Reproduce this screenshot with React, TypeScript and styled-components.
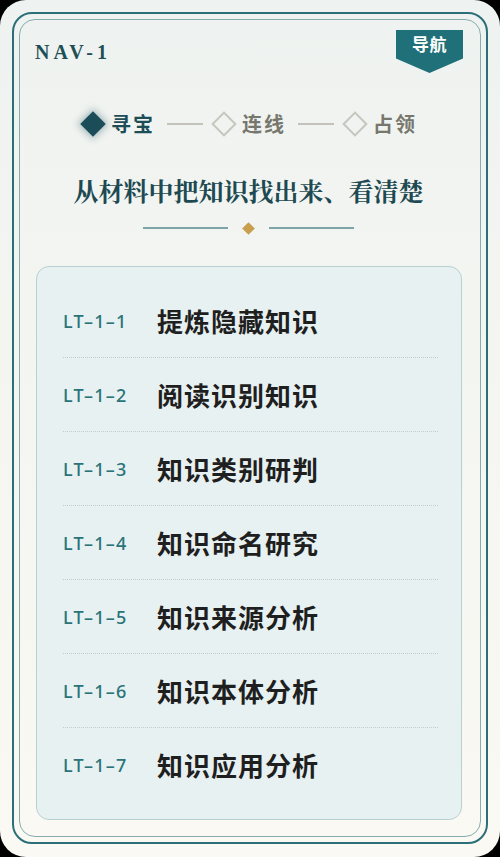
import React from "react";
import styled, { createGlobalStyle } from "styled-components";

const Global = createGlobalStyle`
  html, body { margin: 0; padding: 0; background: #000; }
  body { font-family: "Noto Sans CJK SC", "Noto Sans", sans-serif; }
  * { box-sizing: border-box; }
`;

const Screen = styled.div`
  width: 500px;
  height: 857px;
  border-radius: 26px;
  overflow: hidden;
  background: linear-gradient(180deg, #eef2f0 0%, #f3f5f1 35%, #faf9f3 100%);
  padding: 12px 12px 13px 12px;
`;

const OuterFrame = styled.div`
  height: 100%;
  border: 2px solid #2b6f78;
  border-radius: 20px;
  padding: 5px 5px 5px 5px;
`;

const InnerFrame = styled.div`
  height: 100%;
  border: 1.5px solid #86acad;
  border-radius: 16px;
  padding: 0 18px 0 15px;
  display: flex;
  flex-direction: column;
`;

const Header = styled.div`
  display: flex;
  justify-content: space-between;
  align-items: flex-start;
  margin-top: 10px;
  height: 43px;
`;

const NavCode = styled.div`
  font-family: "Liberation Serif", "DejaVu Serif", serif;
  font-weight: 700;
  font-size: 20px;
  line-height: 1;
  letter-spacing: 4px;
  color: #1e4f56;
  padding-top: 12px;
`;

const Badge = styled.div`
  width: 67px;
  height: 43px;
  margin-right: -1px;
  background: #1f7078;
  clip-path: polygon(0 0, 100% 0, 100% 66%, 50% 100%, 0 66%);
  color: #fff;
  font-weight: 700;
  font-size: 17px;
  line-height: 1;
  text-align: center;
  padding-top: 5px;
  letter-spacing: 0.5px;
`;

const Steps = styled.div`
  display: flex;
  align-items: center;
  justify-content: center;
  height: 30px;
  margin-top: 36px;
  padding-left: 4px;
`;

const Step = styled.div`
  display: flex;
  align-items: center;
  gap: 9px;
`;

const Diamond = styled.span<{ $active?: boolean }>`
  width: 18px;
  height: 18px;
  transform: rotate(45deg);
  display: block;
  background: ${(p) => (p.$active ? "#1b4d59" : "transparent")};
  border: ${(p) => (p.$active ? "none" : "2px solid #c6c6bf")};
  box-shadow: ${(p) => (p.$active ? "0 0 7px 2px rgba(27, 77, 89, 0.35)" : "none")};
`;

const StepLabel = styled.span<{ $active?: boolean }>`
  font-size: 20px;
  font-weight: 700;
  letter-spacing: 2px;
  line-height: 1;
  color: ${(p) => (p.$active ? "#1e4d57" : "#77776e")};
`;

const StepLine = styled.span`
  width: 36px;
  height: 2px;
  background: #c2c2ba;
  margin: 0 12px;
`;

const Subtitle = styled.div`
  margin-top: 34px;
  text-align: center;
  font-family: "Noto Serif CJK SC", "Noto Serif CJK", "Noto Sans CJK SC", serif;
  font-size: 25px;
  font-weight: 700;
  line-height: 34px;
  color: #1d4a52;
`;

const Divider = styled.div`
  display: flex;
  align-items: center;
  justify-content: center;
  height: 10px;
  margin-top: 16px;
  gap: 16px;
`;

const DividerLine = styled.span`
  width: 85px;
  height: 2px;
  background: #7fa4a8;
`;

const GoldDiamond = styled.span`
  width: 9px;
  height: 9px;
  background: #c99f4e;
  transform: rotate(45deg);
  display: block;
`;

const Panel = styled.div`
  margin-top: 33px;
  margin-left: 1px;
  border: 1.5px solid #b7d0d1;
  border-radius: 13px;
  background: #e7f1f1;
  padding: 17px 23px 17px 26px;
`;

const Row = styled.div<{ $last?: boolean }>`
  height: 74px;
  display: flex;
  align-items: center;
  border-bottom: ${(p) => (p.$last ? "none" : "1px dotted #c3cccc")};
`;

const Code = styled.span`
  width: 94px;
  flex-shrink: 0;
  font-family: "Noto Sans", "Open Sans", sans-serif;
  font-size: 18px;
  font-weight: 500;
  letter-spacing: 1.2px;
  color: #2a7479;
`;

const Title = styled.span`
  font-size: 26px;
  font-weight: 700;
  letter-spacing: 1px;
  color: #1f1f1f;
  line-height: 1;
`;

const items = [
  ["LT–1–1", "提炼隐藏知识"],
  ["LT–1–2", "阅读识别知识"],
  ["LT–1–3", "知识类别研判"],
  ["LT–1–4", "知识命名研究"],
  ["LT–1–5", "知识来源分析"],
  ["LT–1–6", "知识本体分析"],
  ["LT–1–7", "知识应用分析"],
];

const steps = [
  { label: "寻宝", active: true },
  { label: "连线", active: false },
  { label: "占领", active: false },
];

export default function App() {
  return (
    <>
      <Global />
      <Screen>
        <OuterFrame>
          <InnerFrame>
            <Header>
              <NavCode>NAV-1</NavCode>
              <Badge>导航</Badge>
            </Header>
            <Steps>
              {steps.map((s, i) => (
                <React.Fragment key={s.label}>
                  <Step>
                    <Diamond $active={s.active} />
                    <StepLabel $active={s.active}>{s.label}</StepLabel>
                  </Step>
                  {i < steps.length - 1 && <StepLine />}
                </React.Fragment>
              ))}
            </Steps>
            <Subtitle>从材料中把知识找出来、看清楚</Subtitle>
            <Divider>
              <DividerLine />
              <GoldDiamond />
              <DividerLine />
            </Divider>
            <Panel>
              {items.map(([code, title], i) => (
                <Row key={code} $last={i === items.length - 1}>
                  <Code>{code}</Code>
                  <Title>{title}</Title>
                </Row>
              ))}
            </Panel>
          </InnerFrame>
        </OuterFrame>
      </Screen>
    </>
  );
}
